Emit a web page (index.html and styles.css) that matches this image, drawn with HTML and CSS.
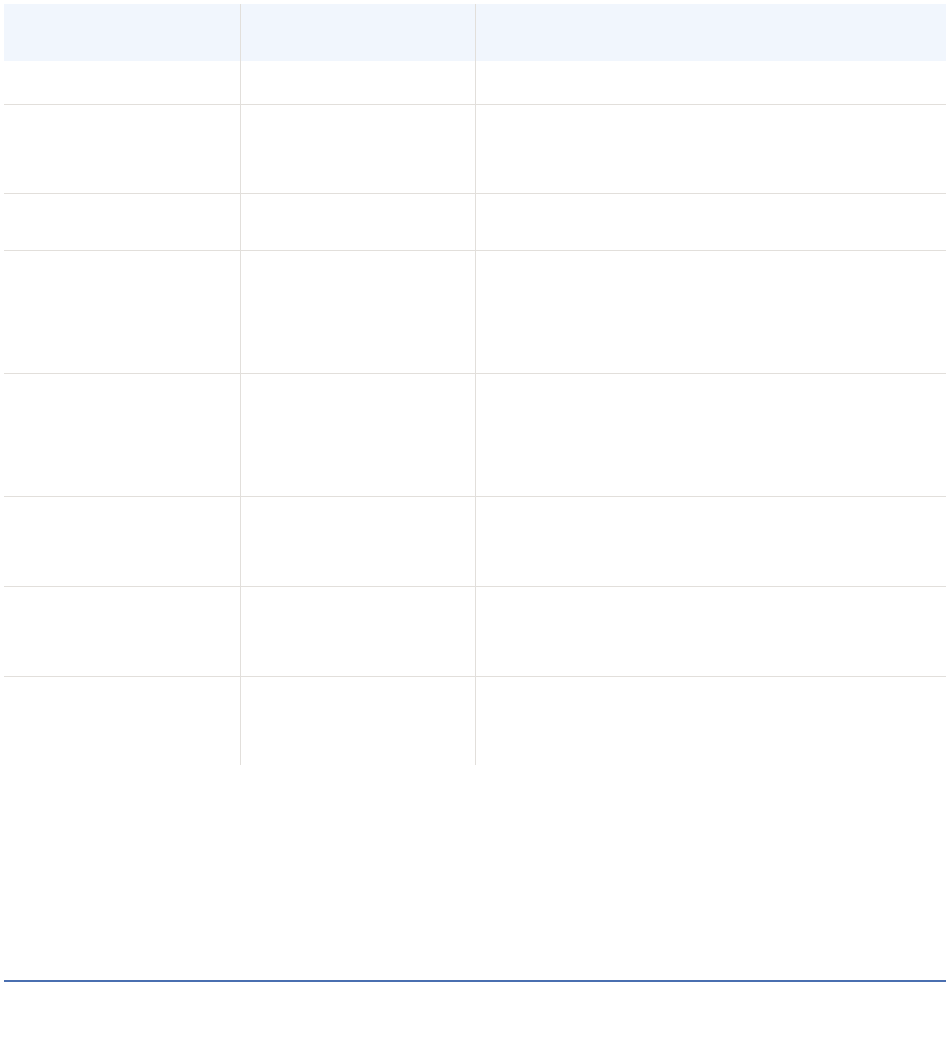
FILE: index.html
```html
<!DOCTYPE html>
<html lang="en">
<head>
<meta charset="utf-8">
<title>Table</title>
<link rel="stylesheet" href="styles.css">
</head>
<body>
<table class="grid">
  <thead>
    <tr class="head"><th></th><th></th><th></th></tr>
  </thead>
  <tbody>
    <tr class="h43"><td></td><td></td><td></td></tr>
    <tr class="h88"><td></td><td></td><td></td></tr>
    <tr class="h56"><td></td><td></td><td></td></tr>
    <tr class="h122"><td></td><td></td><td></td></tr>
    <tr class="h122"><td></td><td></td><td></td></tr>
    <tr class="h89"><td></td><td></td><td></td></tr>
    <tr class="h89"><td></td><td></td><td></td></tr>
    <tr class="h89 last"><td></td><td></td><td></td></tr>
  </tbody>
</table>
<div class="footer-rule"></div>
</body>
</html>
```

FILE: styles.css
```css
html, body {
  background: #ffffff;
}
body {
  margin: 4px;
  font-family: "Liberation Sans", Arial, sans-serif;
}
.grid {
  width: 942px;
  border-collapse: collapse;
  border-spacing: 0;
  table-layout: fixed;
}
.grid th,
.grid td {
  padding: 0;
  box-sizing: border-box;
}
.grid th:nth-child(1),
.grid td:nth-child(1) {
  width: 236px;
}
.grid th:nth-child(2),
.grid td:nth-child(2) {
  width: 235px;
}
.grid th:nth-child(1),
.grid th:nth-child(2),
.grid td:nth-child(1),
.grid td:nth-child(2) {
  border-right: 1px solid #e2dfdb;
}
.head th {
  height: 57px;
  background: #f1f6fd;
}
.grid tbody td {
  border-bottom: 1px solid #e2dfdb;
}
.grid tbody tr.last td {
  border-bottom: none;
}
.h43 td { height: 43px; }
.h88 td { height: 89px; }
.h56 td { height: 57px; }
.h122 td { height: 123px; }
.h89 td { height: 90px; }
.h89.last td { height: 89px; }
.footer-rule {
  margin-top: 215px;
  width: 944px;
  height: 0;
  border-top: 2px solid #4a6fb0;
}
```
